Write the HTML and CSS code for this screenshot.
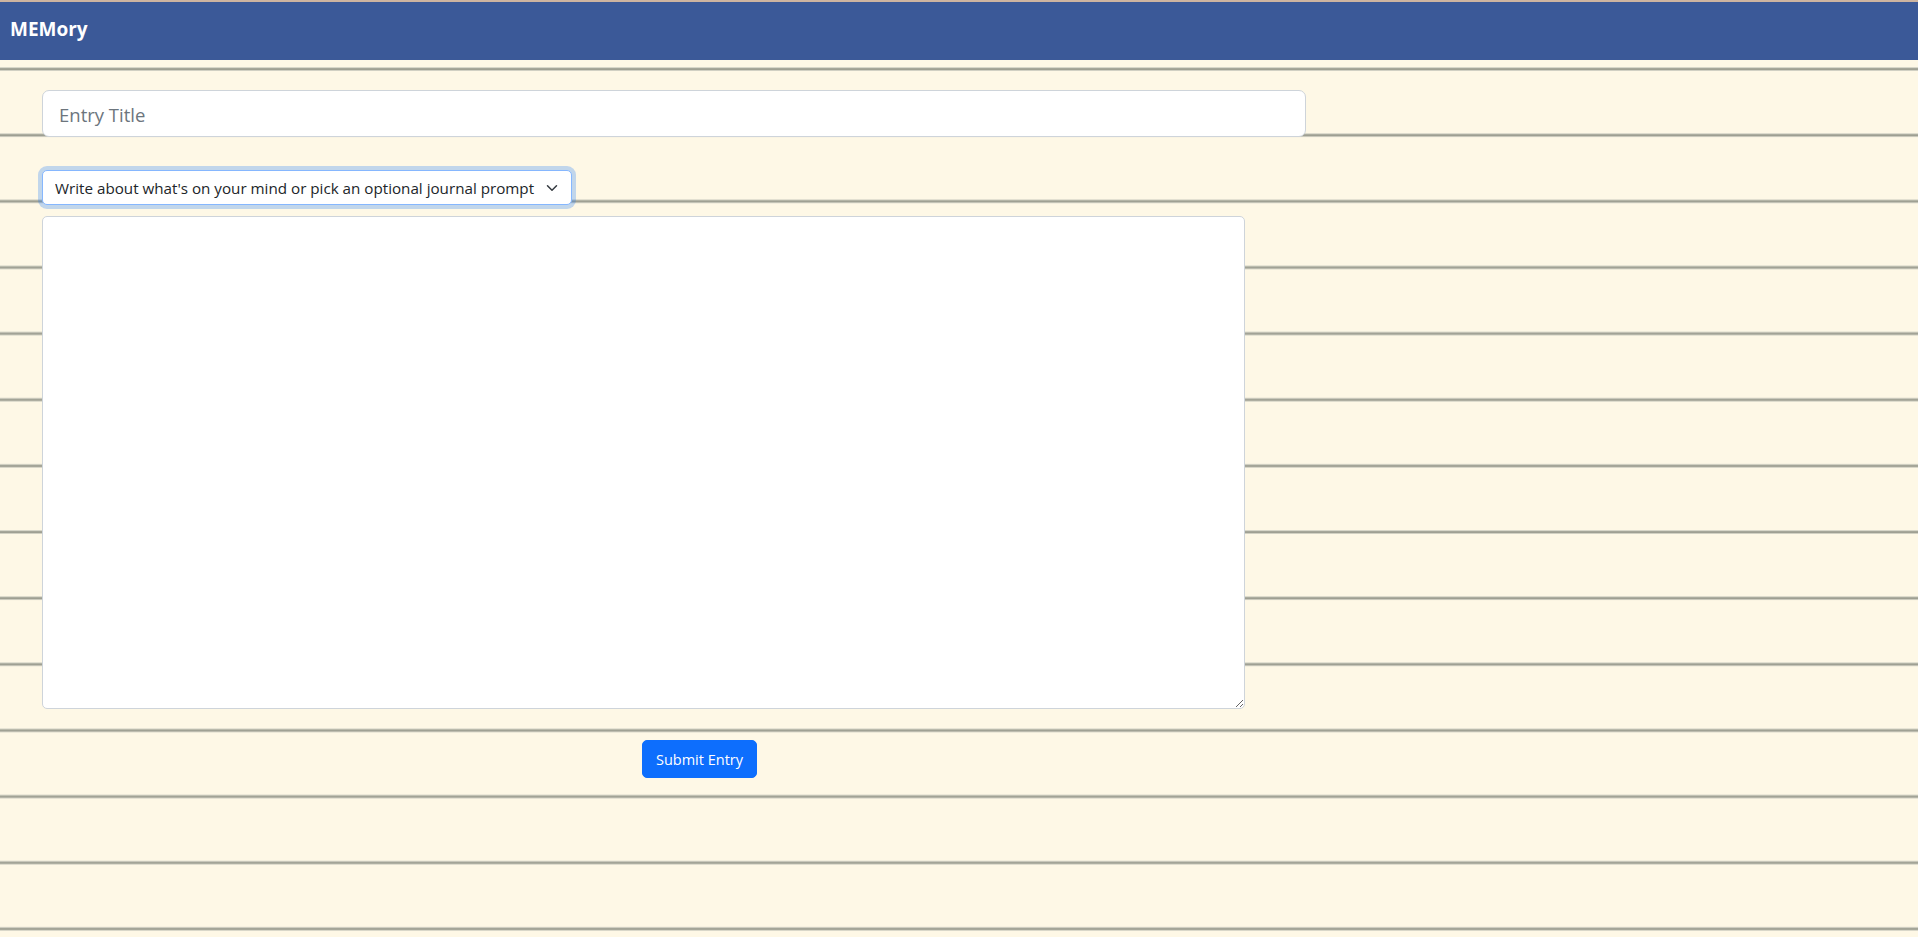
FILE: index.html
```html
<!DOCTYPE html>
<html lang="en">
<head>
<meta charset="utf-8">
<title>MEMory</title>
<link rel="stylesheet" href="styles.css">
</head>
<body>
  <nav class="navbar">
    <span class="brand">MEMory</span>
  </nav>
  <main class="page">
    <form class="entry-form">
      <input class="title-input" type="text" placeholder="Entry Title">
      <div class="prompt-row">
        <div class="select-wrap">
          <select class="prompt-select">
            <option>Write about what's on your mind or pick an optional journal prompt</option>
          </select>
          <svg class="chev" width="16" height="12" viewBox="0 0 16 16"><path fill="none" stroke="#343a40" stroke-linecap="round" stroke-linejoin="round" stroke-width="2" d="M2 5l6 6 6-6"/></svg>
        </div>
      </div>
      <textarea class="body-input"></textarea>
      <div class="actions">
        <button type="button" class="submit-btn">Submit Entry</button>
      </div>
    </form>
  </main>
</body>
</html>
```
FILE: styles.css
```css
html, body {
  margin: 0;
  padding: 0;
}
body {
  min-height: 100vh;
  font-family: "Open Sans", "Noto Sans", "Liberation Sans", sans-serif;
  background-color: #fef8e6;
  background-image: linear-gradient(to bottom,
    #d8d7c9 0, #d8d7c9 1px,
    #a6a79a 1px, #a6a79a 2px,
    #9d9e91 2px, #9d9e91 3px,
    #cfcec1 3px, #cfcec1 4px,
    transparent 4px);
  background-size: 100% 66.15px;
  background-position: 0 67px;
}
.navbar {
  height: 58px;
  background: #3b5998;
  border-top: 2px solid #cdb4a0;
  display: flex;
  align-items: center;
  padding-left: 10px;
}
.brand {
  color: #fff;
  font-weight: 700;
  font-size: 19px;
  margin-top: -4px;
}
.page {
  padding: 30px 0 0 42px;
}
.entry-form {
  display: flex;
  flex-direction: column;
  align-items: flex-start;
}
.title-input {
  box-sizing: border-box;
  width: 1264px;
  height: 47px;
  padding: 2px 16px 0;
  font-family: inherit;
  font-size: 18.5px;
  color: #212529;
  background: #fff;
  border: 1px solid #ced4da;
  border-radius: 7px;
  outline: none;
}
.title-input::placeholder {
  color: #6c757d;
}
.prompt-row {
  margin-top: 33px;
}
.select-wrap {
  position: relative;
  display: inline-block;
}
.prompt-select {
  box-sizing: border-box;
  height: 35px;
  width: 530px;
  padding: 0 36px 0 12px;
  font-family: inherit;
  font-size: 15.2px;
  color: #212529;
  background: #fff;
  border: 1px solid #86b7fe;
  border-radius: 5px;
  box-shadow: 0 0 0 4px rgba(13, 110, 253, 0.25);
  appearance: none;
  -webkit-appearance: none;
  outline: none;
}
.chev {
  position: absolute;
  right: 12px;
  top: 12px;
  pointer-events: none;
}
.body-input {
  box-sizing: border-box;
  margin-top: 11px;
  width: 1203px;
  height: 493px;
  background: #fff;
  border: 1px solid #ced4da;
  border-radius: 5px;
  font-family: inherit;
  outline: none;
}
.actions {
  margin-top: 31px;
  padding-left: 600px;
}
.submit-btn {
  box-sizing: border-box;
  height: 38px;
  width: 115px;
  padding: 0;
  font-family: inherit;
  font-size: 14.5px;
  color: #fff;
  background: #0d6efd;
  border: 1px solid #0d6efd;
  border-radius: 5px;
}
```
